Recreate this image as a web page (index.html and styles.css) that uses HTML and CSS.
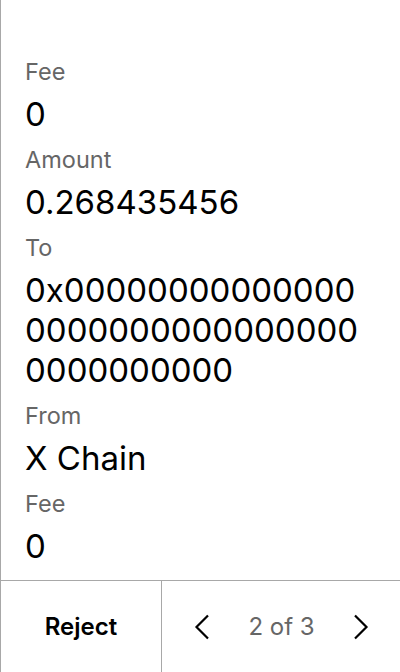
FILE: index.html
```html
<!DOCTYPE html>
<html>
<head>
<meta charset="utf-8">
<link rel="stylesheet" href="styles.css">
</head>
<body>
<div class="screen">
  <div class="content">
    <div class="field">
      <div class="label">Fee</div>
      <div class="value">0</div>
    </div>
    <div class="field">
      <div class="label">Amount</div>
      <div class="value">0.268435456</div>
    </div>
    <div class="field">
      <div class="label">To</div>
      <div class="value addr">0x0000000000000000000000000000000000000000</div>
    </div>
    <div class="field">
      <div class="label">From</div>
      <div class="value">X Chain</div>
    </div>
    <div class="field">
      <div class="label">Fee</div>
      <div class="value">0</div>
    </div>
  </div>
  <div class="bar">
    <div class="reject">Reject</div>
    <div class="pager">
      <svg class="chev" width="16" height="26" viewBox="0 0 16 26"><path d="M14 1.5 L2.5 13 L14 24.5" fill="none" stroke="#000" stroke-width="2.2"/></svg>
      <span class="page">2 of 3</span>
      <svg class="chev" width="16" height="26" viewBox="0 0 16 26"><path d="M2 1.5 L13.5 13 L2 24.5" fill="none" stroke="#000" stroke-width="2.2"/></svg>
    </div>
  </div>
</div>
</body>
</html>
```
FILE: styles.css
```css
html, body {
  margin: 0;
  padding: 0;
  background: #fff;
}
body {
  font-family: Inter, "Noto Sans", sans-serif;
  color: #000;
}
.screen {
  width: 399px;
  height: 672px;
  border-left: 1px solid #a8a8a8;
  display: flex;
  flex-direction: column;
}
.content {
  flex: 1;
  width: 342px;
  padding: 58px 0 0 24px;
  display: flex;
  flex-direction: column;
  gap: 12px;
  overflow: hidden;
}
.label {
  font-size: 23.5px;
  line-height: 28px;
  color: #666;
}
.value {
  font-size: 33px;
  line-height: 40px;
  margin-top: 8px;
}
.addr {
  word-break: break-all;
}
.bar {
  height: 91px;
  border-top: 1px solid #a8a8a8;
  display: flex;
}
.reject {
  width: 160px;
  display: flex;
  align-items: center;
  justify-content: center;
  font-size: 24px;
  font-weight: 600;
  border-right: 1px solid #a8a8a8;
}
.pager {
  flex: 1;
  display: flex;
  align-items: center;
  justify-content: space-between;
  padding: 0 31px 0 32px;
}
.page {
  font-size: 24px;
  color: #666;
}
.chev {
  display: block;
}
```
